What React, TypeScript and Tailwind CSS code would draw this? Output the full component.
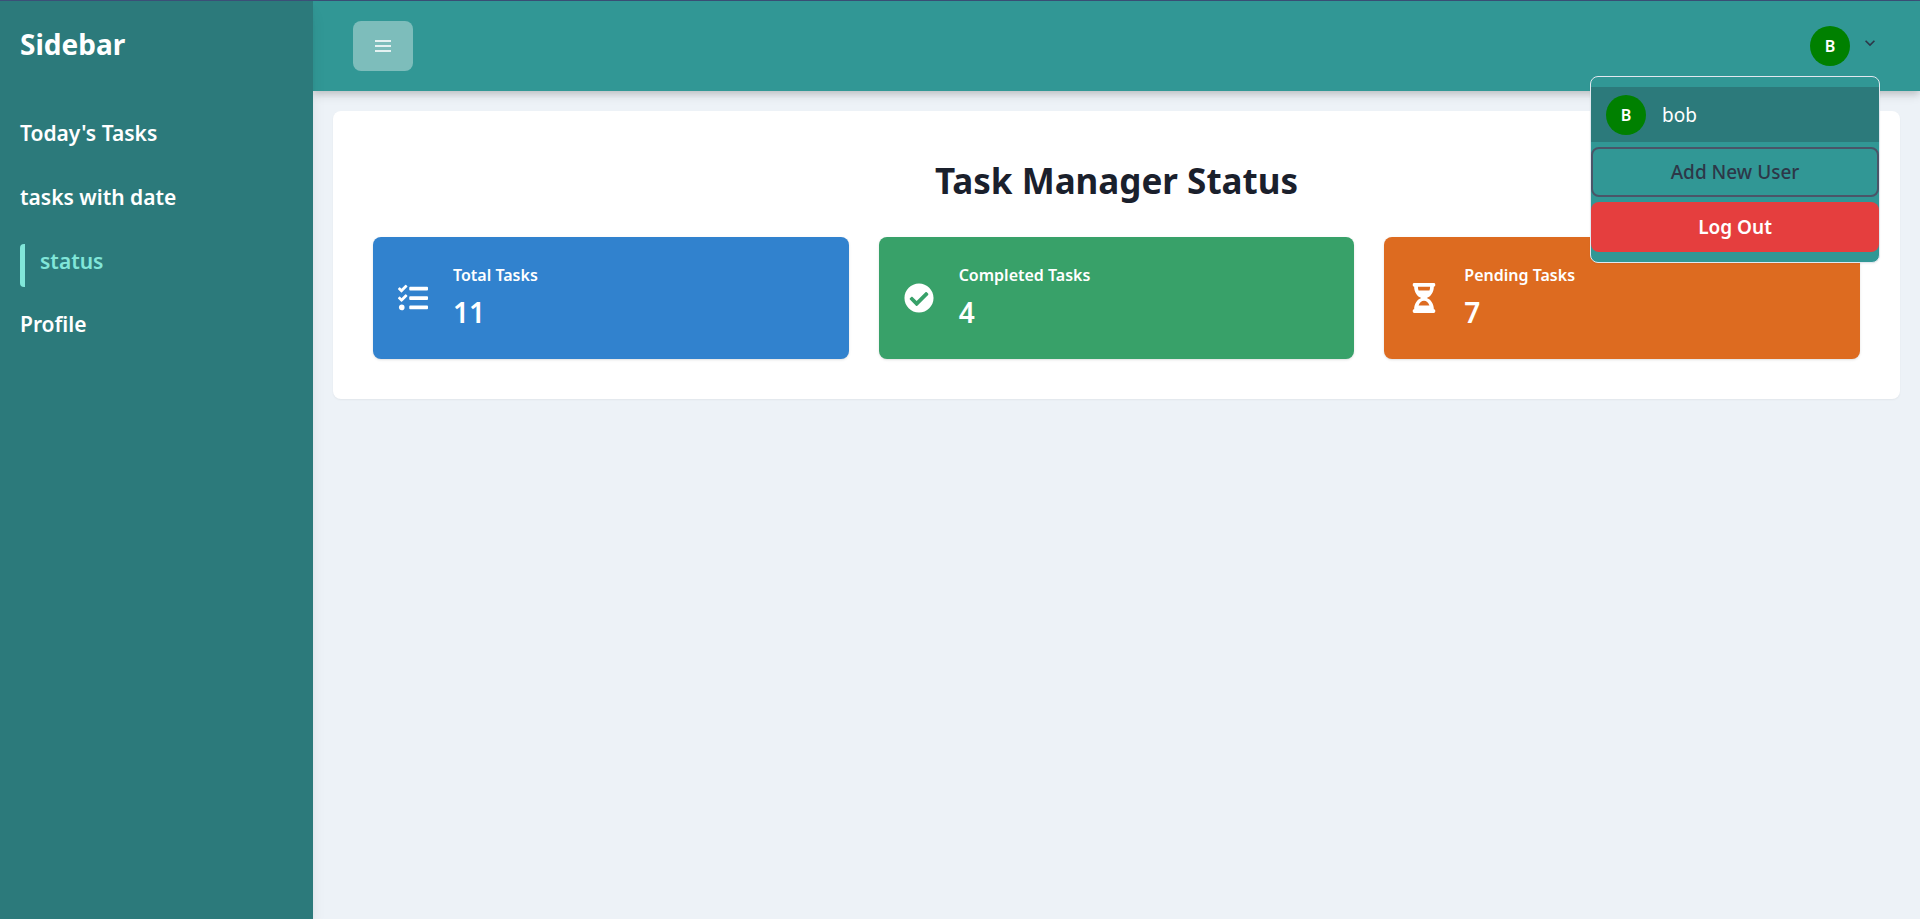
import { useState } from "react";
import { FaCheckCircle, FaHourglassHalf, FaTasks } from "react-icons/fa";
import type { IconType } from "react-icons";

const links = [
  { label: "Today's Tasks", href: "#today", active: false },
  { label: "tasks with date", href: "#dates", active: false },
  { label: "status", href: "#status", active: true },
  { label: "Profile", href: "#profile", active: false },
];

const stats: { label: string; value: number; color: string; Icon: IconType }[] = [
  { label: "Total Tasks", value: 11, color: "bg-[#3182ce]", Icon: FaTasks },
  { label: "Completed Tasks", value: 4, color: "bg-[#38a169]", Icon: FaCheckCircle },
  { label: "Pending Tasks", value: 7, color: "bg-[#dd6b20]", Icon: FaHourglassHalf },
];

function Avatar() {
  return (
    <span className="flex size-10 shrink-0 items-center justify-center rounded-full bg-[#008000] text-base font-semibold text-white">
      B
    </span>
  );
}

function Sidebar() {
  return (
    <aside className="relative z-10 w-[313px] shrink-0 bg-[#2c7a7b] px-5 py-[25px] text-white shadow-[0_10px_15px_-3px_rgba(0,0,0,0.1),0_4px_6px_-2px_rgba(0,0,0,0.05)]">
      <h2 className="text-[28px] leading-9 font-bold">Sidebar</h2>
      <nav className="mt-[54px] flex flex-col items-start gap-5">
        {links.map(({ label, href, active }) => (
          <a
            key={label}
            href={href}
            aria-current={active ? "page" : undefined}
            className={
              active
                ? "rounded-sm border-l-5 border-[#81e6d9] pb-[9px] pl-[15px] text-[21px] leading-[34px] font-semibold text-[#81e6d9]"
                : "pb-[10px] text-[21px] leading-[34px] font-semibold"
            }
          >
            {label}
          </a>
        ))}
      </nav>
    </aside>
  );
}

function UserMenu() {
  const [open, setOpen] = useState(true);
  return (
    <div className="relative">
      <button
        type="button"
        aria-label="Account menu"
        aria-expanded={open}
        onClick={() => setOpen(!open)}
        className="flex items-start gap-[10px]"
      >
        <Avatar />
        <svg viewBox="0 0 24 24" className="mt-[7px] size-5 fill-[#2d3748]" aria-hidden="true">
          <path d="M16.59 8.59L12 13.17 7.41 8.59 6 10l6 6 6-6z" />
        </svg>
      </button>
      {open && (
        <div className="absolute top-[50px] right-0 flex w-[290px] flex-col gap-[5px] rounded-lg border border-[#e2e8f0] bg-[#319795] py-[10px] text-[19px] leading-[30px] shadow-xs">
          <button type="button" className="flex h-[55px] items-center gap-4 bg-[#2c7a7b] px-[15px] text-left text-white">
            <Avatar />
            <span>bob</span>
          </button>
          <button type="button" className="h-[50px] rounded-lg border-2 border-[#4a5568] font-medium text-[#2d3748]">
            Add New User
          </button>
          <button type="button" className="h-[50px] rounded-lg bg-[#e53e3e] font-semibold text-white">
            Log Out
          </button>
        </div>
      )}
    </div>
  );
}

export default function App() {
  return (
    <div className="flex min-h-screen border-t border-[#3c5078] bg-[#edf2f7] font-['Noto_Sans','Open_Sans',sans-serif]">
      <Sidebar />
      <div className="min-w-0 flex-1">
        <header className="relative flex h-[90px] items-center justify-between bg-[#319795] px-10 shadow-[0_4px_6px_-1px_rgba(0,0,0,0.1),0_4px_10px_rgba(0,0,0,0.12)]">
          <button
            type="button"
            aria-label="Toggle sidebar"
            className="flex h-[50px] w-[60px] items-center justify-center rounded-lg bg-[#7dbdbb]"
          >
            <svg viewBox="0 0 16 12" className="h-3 w-4 fill-[#e5f2f2]" aria-hidden="true">
              <path d="M0 0h16v2H0zM0 5h16v2H0zM0 10h16v2H0z" />
            </svg>
          </button>
          <UserMenu />
        </header>
        <main className="p-5">
          <section className="rounded-lg bg-white p-10 shadow-xs">
            <h1 className="mt-[5px] text-center text-[35px] leading-[50px] font-bold text-[#1a202c]">
              Task Manager Status
            </h1>
            <div className="mt-[31px] grid grid-cols-3 gap-[30px]">
              {stats.map(({ label, value, color, Icon }) => (
                <div
                  key={label}
                  className={`flex h-[122px] items-center gap-[25px] rounded-lg px-[25px] text-white shadow-sm ${color}`}
                >
                  <Icon className="h-[30px] w-auto min-w-[30px] shrink-0" aria-hidden="true" />
                  <dl className="pb-[5px]">
                    <dt className="text-base leading-[27px] font-semibold">{label}</dt>
                    <dd className="mt-[5px] text-[28px] leading-9 font-semibold">{value}</dd>
                  </dl>
                </div>
              ))}
            </div>
          </section>
        </main>
      </div>
    </div>
  );
}
